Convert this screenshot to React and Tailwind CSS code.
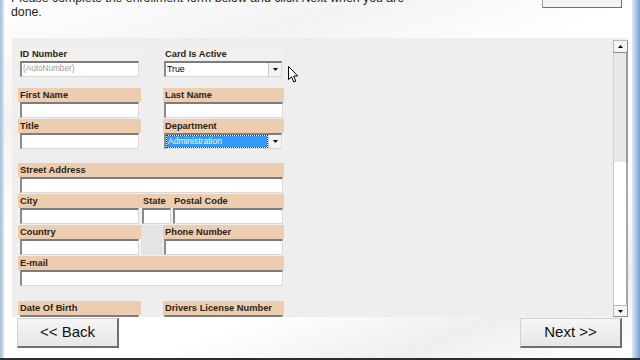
const Band = ({ children, className = "" }) => (
  <div className={`h-[14px] pl-[2px] text-[9.3px] font-bold leading-[14px] text-[#2a1f14] whitespace-nowrap ${className}`}>{children}</div>
);

const Input = ({ children, className = "" }) => (
  <div className={`h-[16px] bg-white border-t-2 border-l-2 border-t-[#7c7c7c] border-l-[#8a8a8a] border-b border-r border-b-[#d8d8d8] border-r-[#d8d8d8] ${className}`}>{children}</div>
);

const Down = () => (
  <svg width="5" height="3" viewBox="0 0 5 3"><path d="M0 0h5L2.5 3z" fill="#000" /></svg>
);
const Up = () => (
  <svg width="5" height="3" viewBox="0 0 5 3"><path d="M0 3h5L2.5 0z" fill="#000" /></svg>
);

const DropBtn = () => (
  <div className="w-[13px] h-full bg-[#f3f3f3] border-l border-[#c8c8c8] flex items-center justify-center">
    <Down />
  </div>
);

export default function App() {
  return (
    <div className="relative w-[640px] h-[360px] overflow-hidden flex flex-col bg-white font-['Liberation_Sans',Arial,sans-serif]">
      <div className="flex flex-1 min-h-0">
        <div className="w-[4px] bg-gradient-to-r from-[#a3bedd] to-[#d9e6f4]" />
        <div className="flex-1 flex flex-col bg-[linear-gradient(160deg,#ffffff_0%,#f3f3f3_22%,#ffffff_40%,#ffffff_70%,#efefef_85%,#ffffff_100%)]">
          {/* header */}
          <div className="h-[38px] flex justify-between items-start">
            <div className="-mt-[9px] pl-[7px] w-[407px] text-[12.3px] leading-[14px] text-[#1e1e1e]">
              Please complete the enrollment form below and click Next when you are done.
            </div>
            <div className="-mt-[16px] mr-[10px] w-[80px] h-[24px] bg-[#f2f2f2] border border-[#a0a0a0] border-b-[#6e6e6e] border-r-[#6e6e6e]" />
          </div>

          {/* panel */}
          <div className="h-[279px] ml-[8px] mr-[4px] flex">
            <div className="flex-1 bg-[#eeeeee] overflow-hidden pl-[6px] pt-[9px] flex flex-col">
              {/* row 1 */}
              <div className="flex gap-[22px]">
                <div className="w-[123px]">
                  <Band className="bg-[#f2f0ee]">ID Number</Band>
                  <div className="px-[2px]">
                    <Input className="text-[8.2px] leading-[12px] pl-[1px] text-[#9a9a9a]">(AutoNumber)</Input>
                  </div>
                </div>
                <div className="w-[121px]">
                  <Band className="bg-[#f2f0ee]">Card Is Active</Band>
                  <div className="pl-[1px] pr-[2px]">
                    <Input className="flex">
                      <div className="flex-1 text-[8.8px] leading-[12px] pl-[1px] text-black">True</div>
                      <DropBtn />
                    </Input>
                  </div>
                </div>
              </div>

              {/* rows 2-3 */}
              <div className="mt-[11px] flex flex-col gap-[1px]">
                <div className="flex gap-[22px]">
                  <div className="w-[123px] bg-[#f4f2f0]">
                    <Band className="bg-[#edcdb0]">First Name</Band>
                    <div className="px-[2px]"><Input /></div>
                  </div>
                  <div className="w-[121px] bg-[#f4f2f0]">
                    <Band className="bg-[#edcdb0]">Last Name</Band>
                    <div className="pl-[1px] pr-[1px]"><Input /></div>
                  </div>
                </div>
                <div className="flex gap-[22px]">
                  <div className="w-[123px] bg-[#f4f2f0]">
                    <Band className="bg-[#edcdb0]">Title</Band>
                    <div className="px-[2px]"><Input /></div>
                  </div>
                  <div className="w-[121px] bg-[#f4f2f0]">
                    <Band className="bg-[#edcdb0]">Department</Band>
                    <div className="pl-[1px] pr-[2px]">
                      <Input className="flex">
                        <div className="flex-1 m-[1px] bg-[#3399ff] text-white text-[8.5px] leading-[10px] pl-[1px] outline-1 outline-dotted outline-[#1a3a66]">Administration</div>
                        <DropBtn />
                      </Input>
                    </div>
                  </div>
                </div>
              </div>

              {/* rows 4-7 */}
              <div className="mt-[14px] flex flex-col gap-[1px]">
                <div className="w-[266px] bg-[#f4f2f0]">
                  <Band className="bg-[#edcdb0]">Street Address</Band>
                  <div className="pl-[2px] pr-[1px]"><Input /></div>
                </div>
                <div className="w-[266px] bg-[#f4f2f0]">
                  <div className="flex bg-[#edcdb0]">
                    <Band className="w-[123px]">City</Band>
                    <Band className="w-[30px]">State</Band>
                    <Band className="w-[113px] pl-[3px]">Postal Code</Band>
                  </div>
                  <div className="flex">
                    <div className="w-[123px] px-[2px]"><Input /></div>
                    <div className="w-[30px] pl-[1px]"><Input /></div>
                    <div className="w-[113px] pl-[2px] pr-[1px]"><Input /></div>
                  </div>
                </div>
                <div className="flex">
                  <div className="w-[123px] bg-[#f4f2f0]">
                    <Band className="bg-[#edcdb0]">Country</Band>
                    <div className="px-[2px]"><Input /></div>
                  </div>
                  <div className="w-[22px] bg-[#e4e4e4]" />
                  <div className="w-[121px] bg-[#f4f2f0]">
                    <Band className="bg-[#edcdb0]">Phone Number</Band>
                    <div className="pl-[1px] pr-[1px]"><Input /></div>
                  </div>
                </div>
                <div className="w-[266px] bg-[#f4f2f0]">
                  <Band className="bg-[#edcdb0]">E-mail</Band>
                  <div className="pl-[2px] pr-[1px]"><Input /></div>
                </div>
              </div>

              {/* row 8 */}
              <div className="mt-[15px] flex gap-[22px]">
                <div className="w-[123px] bg-[#f4f2f0]">
                  <Band className="bg-[#edcdb0]">Date Of Birth</Band>
                  <div className="px-[2px]">
                    <Input className="flex justify-end">
                      <div className="w-[14px] h-[3px] mt-[1px] mr-[1px] bg-[#3a3a3a]" />
                    </Input>
                  </div>
                </div>
                <div className="w-[121px] bg-[#f4f2f0]">
                  <Band className="bg-[#edcdb0]">Drivers License Number</Band>
                  <div className="pl-[1px] pr-[1px]"><Input /></div>
                </div>
              </div>
            </div>

            {/* scrollbar */}
            <div className="w-[15px] flex flex-col pt-[2px] bg-[#eeeeee]">
              <div className="h-[13px] bg-[#f4f4f4] border border-[#b8b8b8] border-r-[#8a8a8a] border-b-[#8a8a8a] flex items-center justify-center">
                <Up />
              </div>
              <div className="h-[109px] bg-[#e8e8e8] border-l border-l-[#d0d0d0] border-r-2 border-r-[#9a9a9a]" />
              <div className="flex-1 bg-white border-l border-l-[#c4c4c4] border-r-2 border-r-[#a8a8a8]" />
              <div className="h-[12px] bg-[#f4f4f4] border border-[#b8b8b8] border-r-[#8a8a8a] border-b-[#8a8a8a] flex items-center justify-center">
                <Down />
              </div>
            </div>
          </div>

          {/* buttons */}
          <div className="mt-[1px] flex justify-between pl-[13px] pr-[10px]">
            <div className="w-[102px] h-[30px] bg-gradient-to-b from-[#f6f6f6] to-[#e6e6e6] border border-[#d0d0d0] border-r-2 border-b-2 border-r-[#707070] border-b-[#707070] flex items-center justify-center text-[15px] text-[#111]">
              &lt;&lt; Back
            </div>
            <div className="w-[102px] h-[30px] bg-gradient-to-b from-[#f6f6f6] to-[#e6e6e6] border border-[#d0d0d0] border-r-2 border-b-2 border-r-[#707070] border-b-[#707070] flex items-center justify-center text-[15px] text-[#111]">
              Next &gt;&gt;
            </div>
          </div>
        </div>
        <div className="w-[8px] bg-gradient-to-r from-[#dfe9f5] to-[#7aa2cf]" />
      </div>
      <div className="h-[2px] bg-[#2d2d2d]" />

      {/* mouse cursor */}
      <svg className="absolute left-[288px] top-[66px]" width="11" height="17" viewBox="0 0 11 17">
        <path d="M0.5 0.5 L0.5 13.5 L3.5 10.8 L5.8 16 L7.8 15.1 L5.6 10 L9.8 10 Z" fill="#fff" stroke="#000" strokeWidth="1" strokeLinejoin="round" />
      </svg>
    </div>
  );
}
